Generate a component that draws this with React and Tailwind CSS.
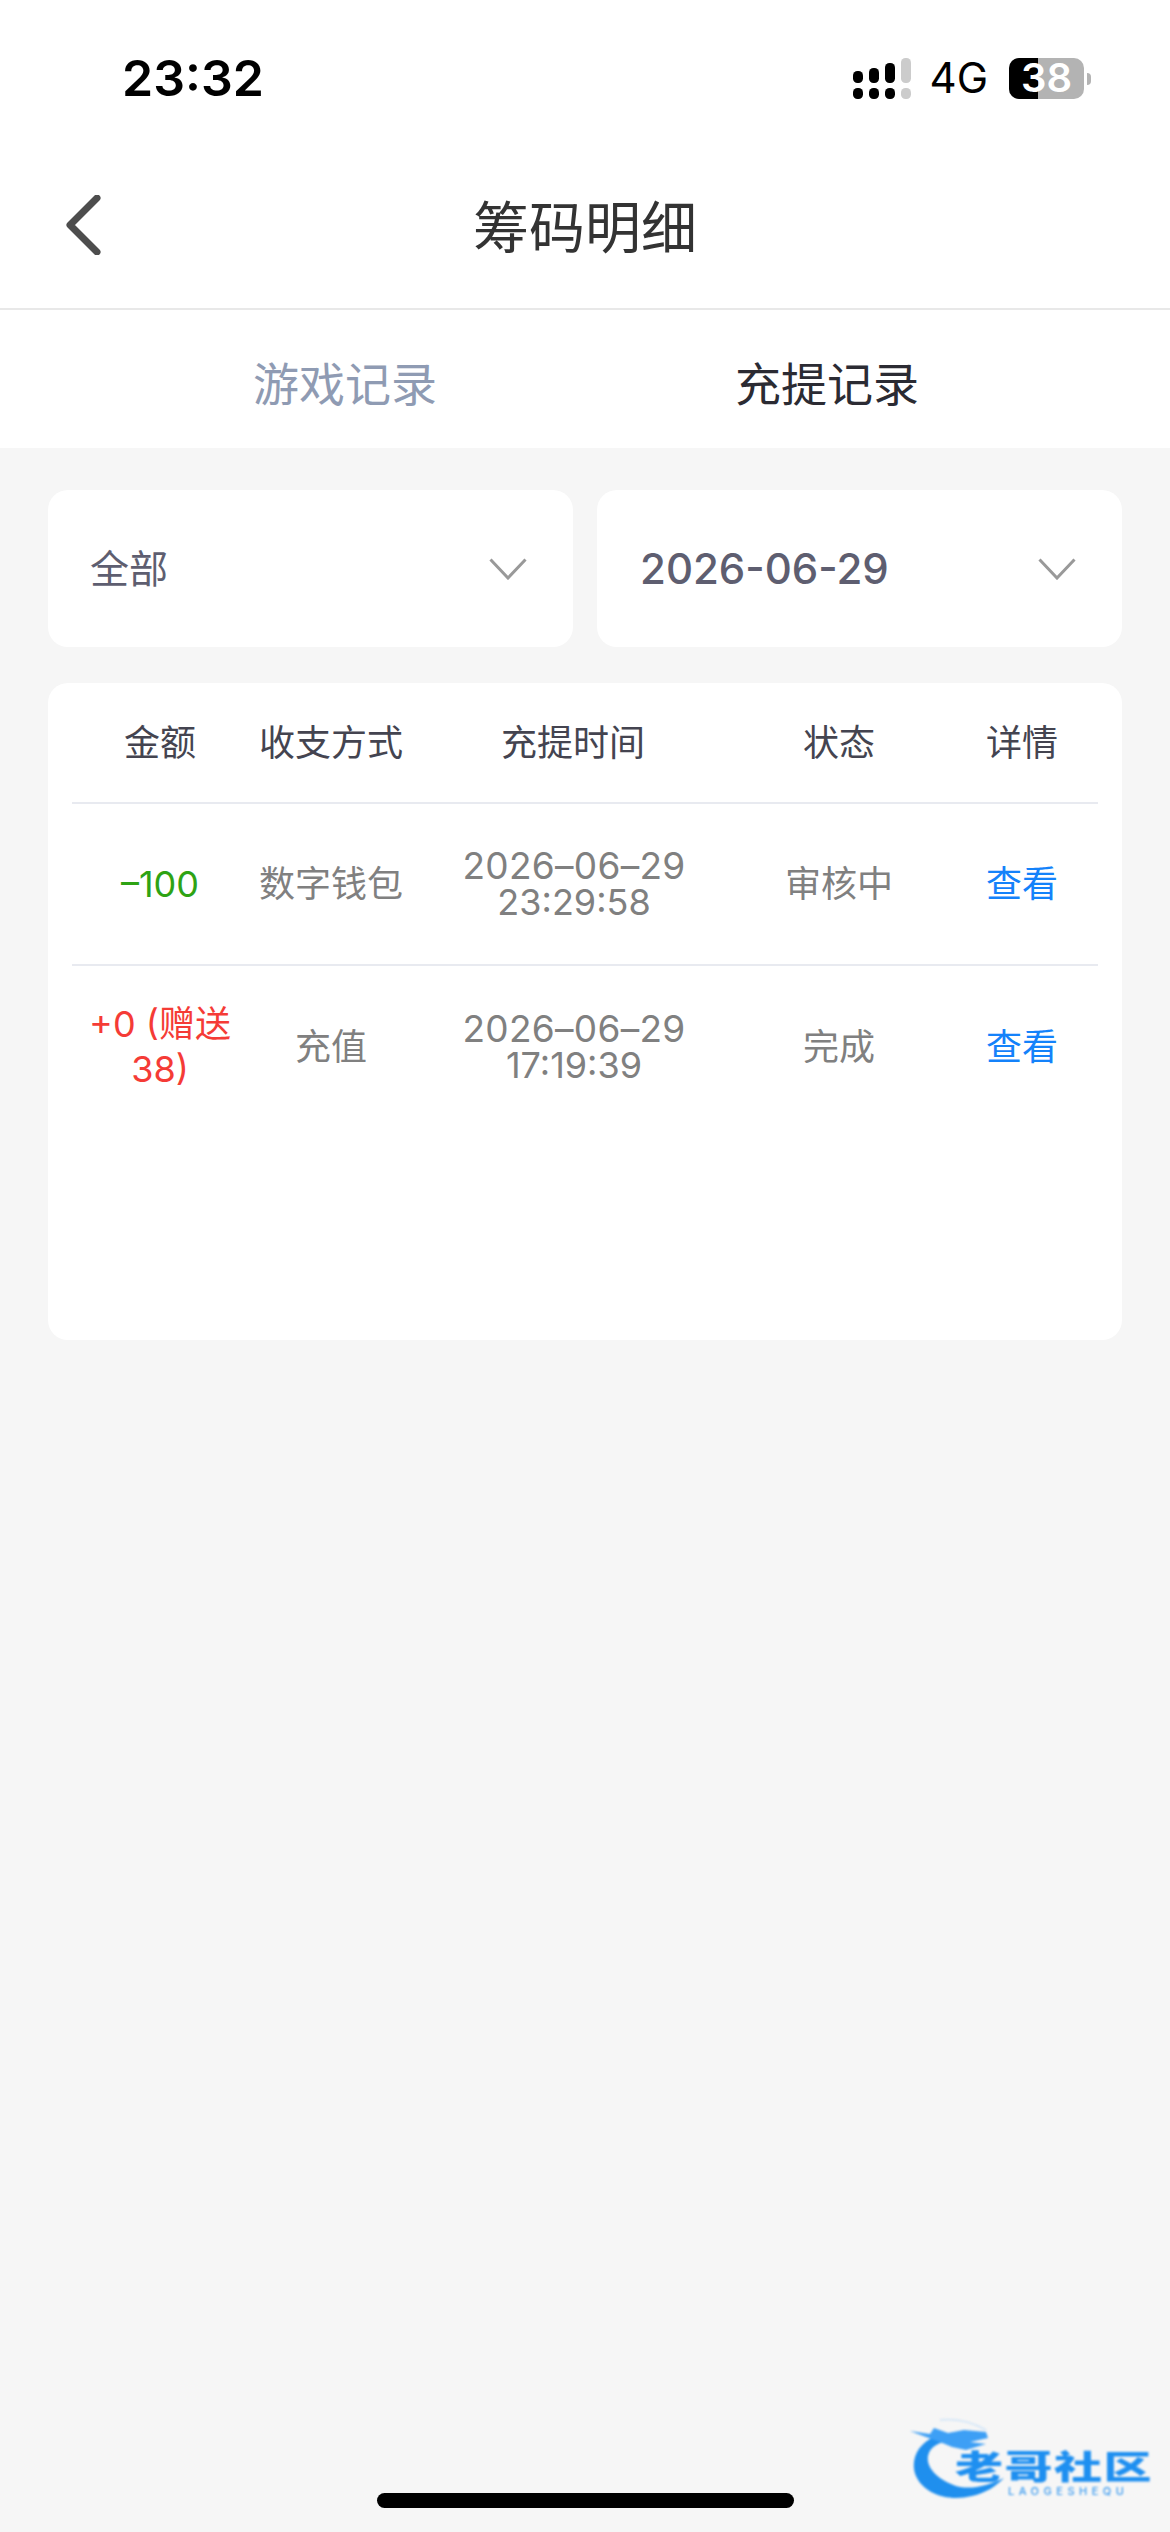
import React from 'react';

const Chevron = () => (
  <svg width="38" height="22" viewBox="0 0 38 22" fill="none">
    <path d="M1.5 1.5 L19 20 L36.5 1.5" stroke="#999999" strokeWidth="3" />
  </svg>
);

const Signal = () => (
  <svg width="58" height="41" viewBox="0 0 58 41">
    <rect x="0" y="13" width="10" height="12" rx="4.5" fill="#000" />
    <rect x="0" y="30" width="10" height="11" rx="4.5" fill="#000" />
    <rect x="16" y="10" width="10" height="15" rx="4.5" fill="#000" />
    <rect x="16" y="30" width="10" height="11" rx="4.5" fill="#000" />
    <rect x="32" y="5" width="10" height="20" rx="4.5" fill="#000" />
    <rect x="32" y="30" width="10" height="11" rx="4.5" fill="#000" />
    <rect x="48" y="0" width="10" height="25" rx="4.5" fill="#cccccc" />
    <rect x="48" y="30" width="10" height="11" rx="4.5" fill="#cccccc" />
  </svg>
);

const Battery = () => (
  <div className="relative h-[41px] w-[82px]">
    <div className="flex h-[41px] w-[75px] overflow-hidden rounded-[10px] bg-[#b3b3b3]">
      <div className="h-full w-[29px] bg-black" />
    </div>
    <div className="absolute right-0 top-[15px] h-[12px] w-[4px] rounded-r-full bg-[#b3b3b3]" />
    <div className="absolute left-0 top-0 flex h-[41px] w-[75px] items-center justify-center text-[40px] font-semibold leading-none text-white">38</div>
  </div>
);

const Dragon = () => (
  <svg className="absolute left-0 top-0" width="290" height="132" viewBox="0 0 290 132" fill="none">
    <path d="M56 36 C36 44 30 62 36 76 C44 94 68 102 92 96 C106 93 116 86 124 78 C108 86 90 90 76 86 C58 80 46 68 48 56 C50 46 60 42 72 40 Z" fill="#1f8fee" />
    <path d="M30 31 L50 34 L54 28 L68 33 L84 30 L106 32 L108 38 L90 42 L106 44 L86 50 L72 47 L60 42 L46 37 Z" fill="#3d9ff5" />
    <path d="M60 20 C76 18 92 22 106 30" stroke="#cfe4f8" strokeWidth="1.5" />
  </svg>
);

const Watermark = () => (
  <div className="absolute bottom-0 right-0 h-[132px] w-[290px] blur-[1px]">
    <Dragon />
    <div className="absolute left-[75px] top-[50px] origin-center scale-y-[0.68] whitespace-nowrap text-[48px] font-black leading-[34px] tracking-[1.5px] text-[#1e8ff0]">老哥社区</div>
    <div className="absolute left-[128px] top-[85px] whitespace-nowrap text-[11px] font-medium leading-[12px] tracking-[4.5px] text-[#3b9bf0]">LAOGESHEQU</div>
  </div>
);

const columns = 'grid grid-cols-[176px_166px_318px_214px_152px] items-center text-center';

const rows = [
  { amount: '–100', amountClass: 'text-[#2ea314]', method: '数字钱包', date: '2026–06–29', time: '23:29:58', status: '审核中' },
  { amount: '+0 (赠送 38)', amountClass: 'text-[#f53b36] leading-[45px] px-[16px]', method: '充值', date: '2026–06–29', time: '17:19:39', status: '完成' },
];

export default function App() {
  return (
    <div className="relative h-[2532px] w-[1170px] overflow-hidden bg-[#f6f6f6] font-['Inter','Noto_Sans_CJK_SC',sans-serif]">
      {/* status bar */}
      <div className="flex h-[155px] items-center justify-between bg-white pl-[122px] pr-[79px] pt-[1px]">
        <span className="text-[50px] font-semibold leading-none text-black">23:32</span>
        <div className="flex items-center">
          <Signal />
          <span className="ml-[19px] mr-[21px] text-[42px] font-normal leading-none text-black">4G</span>
          <Battery />
        </div>
      </div>

      {/* nav bar */}
      <div className="relative flex h-[155px] items-center justify-center border-b-2 border-[#e8e8e8] bg-white pb-[8px]">
        <svg className="absolute left-[64px] top-[40px]" width="38" height="60" viewBox="0 0 38 60" fill="none">
          <path d="M33 3 L6 30 L33 57" stroke="#4d4d4d" strokeWidth="7" strokeLinecap="round" strokeLinejoin="round" />
        </svg>
        <h1 className="text-[56px] font-normal leading-none text-[#333333]">筹码明细</h1>
      </div>

      {/* tabs */}
      <div className="flex h-[138px] items-center gap-[298px] bg-white pl-[253px] pt-[9px] text-[46px] leading-none">
        <span className="whitespace-nowrap text-[#8f9bb3]">游戏记录</span>
        <span className="whitespace-nowrap text-[#2b2b33]">充提记录</span>
      </div>

      {/* filters */}
      <div className="mx-[48px] mt-[42px] grid grid-cols-[525px_525px] gap-[24px]">
        <div className="flex h-[157px] items-center justify-between rounded-[20px] bg-white pl-[42px] pr-[46px]">
          <span className="text-[39px] leading-none text-[#5e5e70]">全部</span>
          <Chevron />
        </div>
        <div className="flex h-[157px] items-center justify-between rounded-[20px] bg-white pl-[43px] pr-[46px]">
          <span className="text-[42px] font-medium leading-none text-[#5e5e70]">2026-06-29</span>
          <Chevron />
        </div>
      </div>

      {/* records */}
      <div className="mx-[48px] mt-[36px] h-[657px] rounded-[20px] bg-white px-[24px]">
        <div className={`${columns} h-[121px] border-b-2 border-[#e8eaf0] text-[36px] leading-none text-[#444450]`}>
          <span>金额</span>
          <span>收支方式</span>
          <span>充提时间</span>
          <span>状态</span>
          <span>详情</span>
        </div>
        {rows.map((row, idx) => (
          <div key={row.time} className={`${columns} h-[162px] text-[36px] text-[#808080] ${idx === 0 ? 'border-b-2 border-[#e8eaf0]' : ''}`}>
            <span className={row.amountClass}>{row.amount}</span>
            <span>{row.method}</span>
            <div className="pl-[2px] leading-[36px]">
              <div className="text-[37px] tracking-[0.3px]">{row.date}</div>
              <div>{row.time}</div>
            </div>
            <span>{row.status}</span>
            <span className="text-[#1482fa]">查看</span>
          </div>
        ))}
      </div>

      {/* home indicator */}
      <div className="absolute bottom-[24px] left-[377px] h-[15px] w-[417px] rounded-full bg-black" />
      <Watermark />
    </div>
  );
}
